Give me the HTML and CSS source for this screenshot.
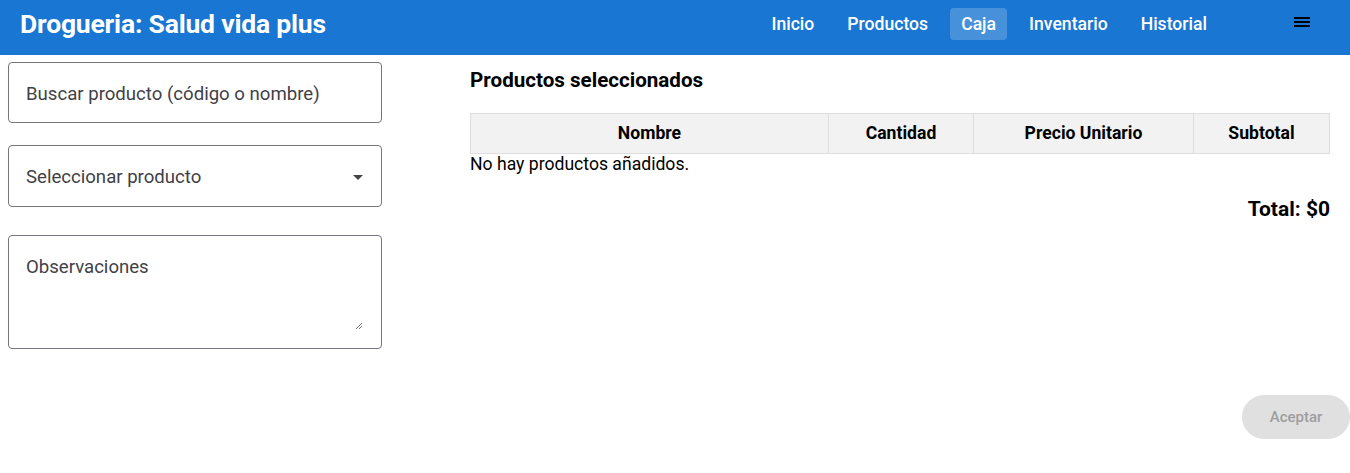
FILE: index.html
```html
<!DOCTYPE html>
<html lang="es">
<head>
<meta charset="utf-8">
<title>Caja</title>
<link rel="stylesheet" href="styles.css">
</head>
<body>
<header class="topbar">
  <h1 class="brand">Drogueria: Salud vida plus</h1>
  <nav class="nav">
    <a class="nav-item">Inicio</a>
    <a class="nav-item">Productos</a>
    <a class="nav-item active">Caja</a>
    <a class="nav-item">Inventario</a>
    <a class="nav-item">Historial</a>
  </nav>
  <button class="menu-btn" aria-label="menu">
    <svg width="16" height="12" viewBox="0 0 16 12"><rect x="0" y="0" width="16" height="2"/><rect x="0" y="4" width="16" height="2"/><rect x="0" y="8" width="16" height="2"/></svg>
  </button>
</header>
<main class="page">
  <section class="left">
    <div class="field input-field">Buscar producto (código o nombre)</div>
    <div class="field select-field">
      <span>Seleccionar producto</span>
      <svg class="caret" width="10" height="5" viewBox="0 0 10 5"><path d="M0 0 L10 0 L5 5 Z"/></svg>
    </div>
    <div class="field textarea-field">
      <span>Observaciones</span>
      <svg class="grip" width="8" height="8" viewBox="0 0 8 8"><path d="M7 1 L1 7 M7 4 L4 7" stroke="#777" stroke-width="1"/></svg>
    </div>
  </section>
  <section class="right">
    <h2 class="section-title">Productos seleccionados</h2>
    <table class="items">
      <thead>
        <tr>
          <th class="c-name">Nombre</th>
          <th class="c-qty">Cantidad</th>
          <th class="c-price">Precio Unitario</th>
          <th class="c-sub">Subtotal</th>
        </tr>
      </thead>
    </table>
    <p class="empty">No hay productos añadidos.</p>
    <p class="total">Total: $0</p>
  </section>
</main>
<div class="actions">
  <button class="accept" disabled>Aceptar</button>
</div>
</body>
</html>
```
FILE: styles.css
```css
* { box-sizing: border-box; }
html, body { margin: 0; padding: 0; }
body {
  font-family: Roboto, "Liberation Sans", sans-serif;
  background: #fff;
  color: #000;
  width: 1350px;
  height: 473px;
  overflow: hidden;
}
.topbar {
  height: 55px;
  background: #1976d2;
  display: flex;
  align-items: center;
  padding: 0 20px;
}
.brand {
  margin: 0;
  color: #fff;
  font-size: 26.5px;
  font-weight: 700;
  letter-spacing: -0.2px;
  flex: 1;
  position: relative;
  top: -4px;
}
.nav {
  display: flex;
  gap: 11px;
  position: relative;
  top: -4px;
}
.nav-item {
  color: #fff;
  font-size: 17.6px;
  font-weight: 500;
  padding: 5px 11px;
  border-radius: 4px;
  line-height: 22px;
}
.nav-item.active { background: rgba(255,255,255,0.2); }
.menu-btn {
  background: none;
  border: 0;
  padding: 0;
  margin-left: 76px;
  margin-right: 20px;
  position: relative;
  top: -5px;
  display: flex;
}
.menu-btn svg { fill: #000; }
.page {
  display: flex;
  padding: 7px 20px 0 8px;
}
.left {
  width: 374px;
  display: flex;
  flex-direction: column;
}
.field {
  border: 1px solid #75767d;
  border-radius: 4px;
  color: #3f4147;
  font-size: 18.6px;
  padding: 2px 17px 0;
  display: flex;
  align-items: center;
}
.input-field { height: 61px; }
.select-field {
  height: 62px;
  margin-top: 22px;
  justify-content: space-between;
  padding-right: 18px;
}
.caret { fill: #444; }
.textarea-field {
  height: 114px;
  margin-top: 28px;
  align-items: flex-start;
  padding-top: 20px;
  position: relative;
}
.grip { position: absolute; right: 18px; bottom: 18px; }
.right {
  flex: 1;
  margin-left: 88px;
}
.section-title {
  margin: 0;
  font-size: 20.6px;
  font-weight: 700;
  line-height: 24px;
  padding-top: 6px;
}
.items {
  width: 100%;
  border-collapse: collapse;
  margin-top: 21px;
}
.items th {
  background: #f2f2f2;
  border: 1px solid #ddd;
  height: 40px;
  font-size: 17.6px;
  font-weight: 700;
  text-align: center;
  padding: 0 8px 1px;
}
.c-name { width: 358px; }
.c-qty { width: 145px; }
.c-price { width: 220px; }
.empty {
  margin: 0;
  font-size: 17.6px;
  line-height: 21px;
}
.total {
  margin: 22px 0 0;
  text-align: right;
  font-size: 21px;
  font-weight: 700;
}
.actions {
  position: absolute;
  right: 0;
  top: 395px;
}
.accept {
  width: 108px;
  height: 44px;
  border-radius: 22px;
  border: 0;
  background: #e0e0e0;
  color: #9e9e9e;
  font-family: Roboto, "Liberation Sans", sans-serif;
  font-size: 15px;
  font-weight: 500;
}
```
